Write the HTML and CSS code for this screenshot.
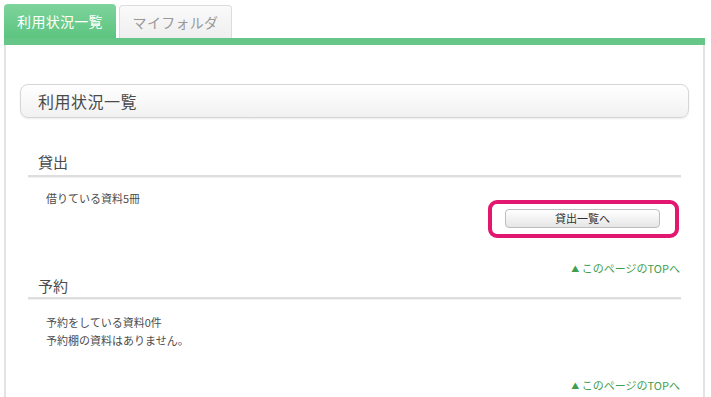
FILE: index.html
```html
<!DOCTYPE html>
<html lang="ja">
<head>
<meta charset="utf-8">
<link rel="stylesheet" href="styles.css">
</head>
<body>
<div class="page">
  <div class="tabs">
    <div class="tab tab-active">利用状況一覧</div>
    <div class="tab tab-idle">マイフォルダ</div>
  </div>
  <div class="tabbar"></div>
  <div class="panel">
    <div class="title-box">利用状況一覧</div>

    <div class="section">
      <h2 class="sec-head sec-head-first">貸出</h2>
      <p class="sec-text first-text">借りている資料5冊</p>
      <div class="btn-row">
        <div class="btn-wrap">
          <button class="btn">貸出一覧へ</button>
          <div class="highlight"></div>
        </div>
      </div>
      <div class="toplink toplink-first"><span class="tri">▲</span> このページのTOPへ</div>
    </div>

    <div class="section">
      <h2 class="sec-head sec-head-second">予約</h2>
      <p class="sec-text second-text">予約をしている資料0件</p>
      <p class="sec-text">予約棚の資料はありません。</p>
      <div class="toplink toplink-second"><span class="tri">▲</span> このページのTOPへ</div>
    </div>
  </div>
</div>
</body>
</html>
```
FILE: styles.css
```css
* { box-sizing: border-box; }
html, body {
  margin: 0;
  padding: 0;
  background: #fff;
  font-family: "Noto Sans CJK JP", "Noto Sans", sans-serif;
  overflow: hidden;
}
.page {
  padding: 4px 6px 0 4px;
  height: 397px;
  display: flex;
  flex-direction: column;
}
.tabs {
  display: flex;
  align-items: flex-end;
  gap: 3px;
  height: 34px;
}
.tab {
  border-radius: 4px 4px 0 0;
  font-size: 14px;
  display: flex;
  align-items: center;
  justify-content: center;
  letter-spacing: 0.3px;
}
.tab-active {
  width: 112px;
  height: 34px;
  background: linear-gradient(#7ed49c, #5cc47f);
  color: #fff;
}
.tab-idle {
  width: 113px;
  height: 33px;
  background: linear-gradient(#fafafa, #efefef);
  border: 1px solid #dcdcdc;
  border-bottom: none;
  color: #999;
}
.tabbar {
  height: 7px;
  background: #66c688;
}
.panel {
  flex: 1;
  border-left: 2px solid #e3e3e3;
  border-right: 2px solid #e3e3e3;
  padding: 39px 14px 0 14px;
}
.title-box {
  height: 34px;
  border: 1px solid #d6d6d6;
  border-radius: 8px;
  background: linear-gradient(#ffffff, #f1f1f1);
  box-shadow: 0 1px 2px rgba(0,0,0,0.08);
  font-size: 16px;
  color: #4a4a4a;
  display: flex;
  align-items: center;
  padding-left: 17px;
  letter-spacing: 0.5px;
}
.section {
  margin: 0 8px;
}
.sec-head {
  margin: 0;
  font-weight: normal;
  font-size: 15px;
  line-height: 16px;
  color: #4a4a4a;
  padding-left: 10px;
  border-bottom: 2px solid #dedede;
  box-shadow: 0 1px 0 #f0f0f0;
}
.sec-head-first {
  margin-top: 36px;
  padding-bottom: 5px;
}
.sec-head-second {
  margin-top: 1px;
  padding-bottom: 3px;
}
.sec-text {
  margin: 0;
  font-size: 11px;
  line-height: 18px;
  color: #4d4d4d;
  padding-left: 18px;
}
.first-text { margin-top: 12px; }
.second-text { margin-top: 14px; }
.btn-row {
  display: flex;
  justify-content: flex-end;
  padding-right: 21px;
  margin-top: 2px;
}
.btn-wrap {
  position: relative;
}
.btn {
  display: block;
  width: 155px;
  height: 19px;
  padding: 0;
  border: 1px solid #bdbdbd;
  border-radius: 4px;
  background: linear-gradient(#ffffff, #e6e6e6);
  font-family: inherit;
  font-size: 11px;
  line-height: 17px;
  color: #333;
}
.highlight {
  position: absolute;
  left: -17px;
  top: -9px;
  right: -19px;
  bottom: -10px;
  border: 4px solid #e2176f;
  border-radius: 9px;
  pointer-events: none;
}
.toplink {
  text-align: right;
  font-size: 11px;
  line-height: 16px;
  color: #3f9f4f;
  padding-right: 1px;
}
.tri {
  font-size: 8px;
  vertical-align: 1px;
}
.toplink-first { margin-top: 32px; }
.toplink-second { margin-top: 28px; }
```
